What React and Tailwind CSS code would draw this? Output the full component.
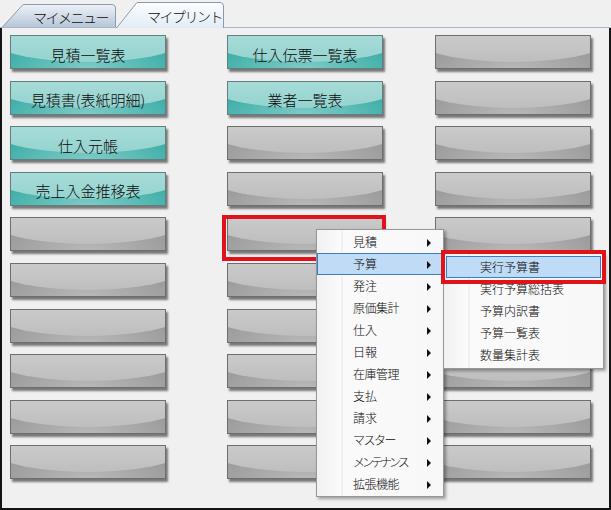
import React from "react";

const JP = "font-['Noto_Sans_CJK_JP','Noto_Sans_CJK_SC',sans-serif] font-light";

function Btn({ label, teal }) {
  return (
    <div
      className={
        "relative w-[156px] h-[34px] border overflow-hidden shadow-[2px_3px_2px_rgba(0,0,0,0.5)] flex items-center justify-center " +
        (teal
          ? "border-[#637f7d] bg-[radial-gradient(ellipse_60%_80%_at_50%_100%,#7fcbc7,#3eaea8)]"
          : "border-[#6e6e6e] bg-[radial-gradient(ellipse_60%_80%_at_50%_100%,#b8b8b8,#9b9b9b)]")
      }
    >
      <div
        className={
          "absolute left-[-15%] w-[130%] top-[-24px] h-[50px] rounded-[50%] " +
          (teal
            ? "bg-[linear-gradient(to_bottom,#b6e3df,#95d3cf)]"
            : "bg-[linear-gradient(to_bottom,#d5d5d5,#bebebe)]")
        }
      />
      {label && (
        <span className={"relative text-[15px] leading-none pt-[4px] text-[#0a0a0a] whitespace-nowrap " + JP}>
          {label}
        </span>
      )}
    </div>
  );
}

function Column({ labels, className }) {
  const rows = [];
  for (let i = 0; i < 10; i++) {
    const l = labels[i];
    rows.push(<Btn key={i} label={l} teal={!!l} />);
  }
  return <div className={"flex flex-col gap-[11.6px] " + (className || "")}>{rows}</div>;
}

function Arrow() {
  return <div className="absolute right-[11px] top-[7px] w-0 h-0 border-y-[4px] border-y-transparent border-l-[4px] border-l-[#111]" />;
}

function MenuItem({ label, active, sub, hasArrow, track }) {
  return (
    <div
      className={
        "relative h-[22px] flex items-center " +
        (sub ? "pl-[33px] " : "pl-[35px] ") +
        (active ? "bg-[#c0dbf5] border border-[#3b7cc6] " + (sub ? "mx-[2px]" : "") : "border border-transparent " + (sub ? "mx-[2px]" : ""))
      }
    >
      <span className={"text-[12px] leading-none text-[#0a0a0a] whitespace-nowrap " + (track || "") + " " + JP}>{label}</span>
      {hasArrow && <Arrow />}
    </div>
  );
}

export default function App() {
  const menu = [
    ["見積"],
    ["予算"],
    ["発注"],
    ["原価集計", "tracking-[-0.5px]"],
    ["仕入"],
    ["日報"],
    ["在庫管理", "tracking-[-0.5px]"],
    ["支払"],
    ["請求"],
    ["マスター", "tracking-[-1.5px]"],
    ["メンテナンス", "tracking-[-3px]"],
    ["拡張機能", "tracking-[-0.5px]"],
  ];
  const sub = ["実行予算書", "実行予算総括表", "予算内訳書", "予算一覧表", "数量集計表"];
  return (
    <div className="relative w-[611px] h-[510px] overflow-hidden bg-[#f0f0f0]">
      {/* tab strip */}
      <div className="h-[28px] flex items-end border-b border-[#a5b8cb]">
        <div className="relative ml-[2px] w-[114px] h-[23px] flex items-center pl-[31px]">
          <svg className="absolute inset-0" width="114" height="23" viewBox="0 0 114 23">
            <defs>
              <linearGradient id="t1" x1="0" y1="0" x2="0" y2="1">
                <stop offset="0" stopColor="#eef2f7" />
                <stop offset="1" stopColor="#b6c6d8" />
              </linearGradient>
            </defs>
            <path d="M0.5 23 L21 0.5 H110 Q113.5 0.5 113.5 4 V23" fill="url(#t1)" stroke="#8a9bb0" />
          </svg>
          <span className={"relative text-[14px] tracking-[-1.5px] leading-none pt-[2px] text-[#0a0a0a] " + JP}>マイメニュー</span>
        </div>
        <div className="relative w-[108px] h-[26px] mb-[-1px] flex items-center pl-[31px]">
          <svg className="absolute inset-0" width="108" height="26" viewBox="0 0 108 26">
            <defs>
              <linearGradient id="t2" x1="0" y1="0" x2="0" y2="1">
                <stop offset="0" stopColor="#fdfeff" />
                <stop offset="1" stopColor="#e2ebf5" />
              </linearGradient>
            </defs>
            <path d="M0.5 26 L21 0.5 H104 Q107.5 0.5 107.5 4 V26" fill="url(#t2)" stroke="#8a9bb0" />
          </svg>
          <span className={"relative text-[14px] tracking-[-1.5px] leading-none pt-[2px] text-[#0a0a0a] " + JP}>マイプリント</span>
        </div>
      </div>

      {/* panel */}
      <div className="h-[482px] border-x-2 border-b-2 border-[#151515] pl-[8px] pt-[7px] flex">
        <Column labels={["見積一覧表", "見積書(表紙明細)", "仕入元帳", "売上入金推移表"]} />
        <Column labels={["仕入伝票一覧表", "業者一覧表"]} className="ml-[61px]" />
        <Column labels={[]} className="ml-[52px]" />
      </div>

      {/* red highlight on button */}
      <div className="absolute left-[222px] top-[215px] w-[164px] h-[46px] border-4 border-[#e0121a]" />

      {/* context menu */}
      <div className="absolute left-[316px] top-[229px] w-[128px] h-[268px] border border-[#979797] bg-[linear-gradient(to_right,#f1f1f1,#fbfbfb_24px,#e8e8e8_25px,#fafafa_26px,#f8f8f8)] shadow-[2px_2px_3px_rgba(0,0,0,0.35)] py-[1px]">
        {menu.map(([m, t], i) => (
          <MenuItem key={m} label={m} track={t} active={i === 1} hasArrow />
        ))}
      </div>

      {/* submenu */}
      <div className="absolute left-[443px] top-[253px] w-[161px] h-[116px] border border-[#979797] bg-[linear-gradient(to_right,#f1f1f1,#fbfbfb_24px,#e8e8e8_25px,#fafafa_26px,#f8f8f8)] shadow-[2px_2px_3px_rgba(0,0,0,0.35)] py-[2px]">
        {sub.map((m, i) => (
          <MenuItem key={m} label={m} active={i === 0} sub />
        ))}
      </div>

      {/* red highlight on submenu item */}
      <div className="absolute left-[441px] top-[250px] w-[165px] h-[34px] border-4 border-[#e0121a]" />
    </div>
  );
}
